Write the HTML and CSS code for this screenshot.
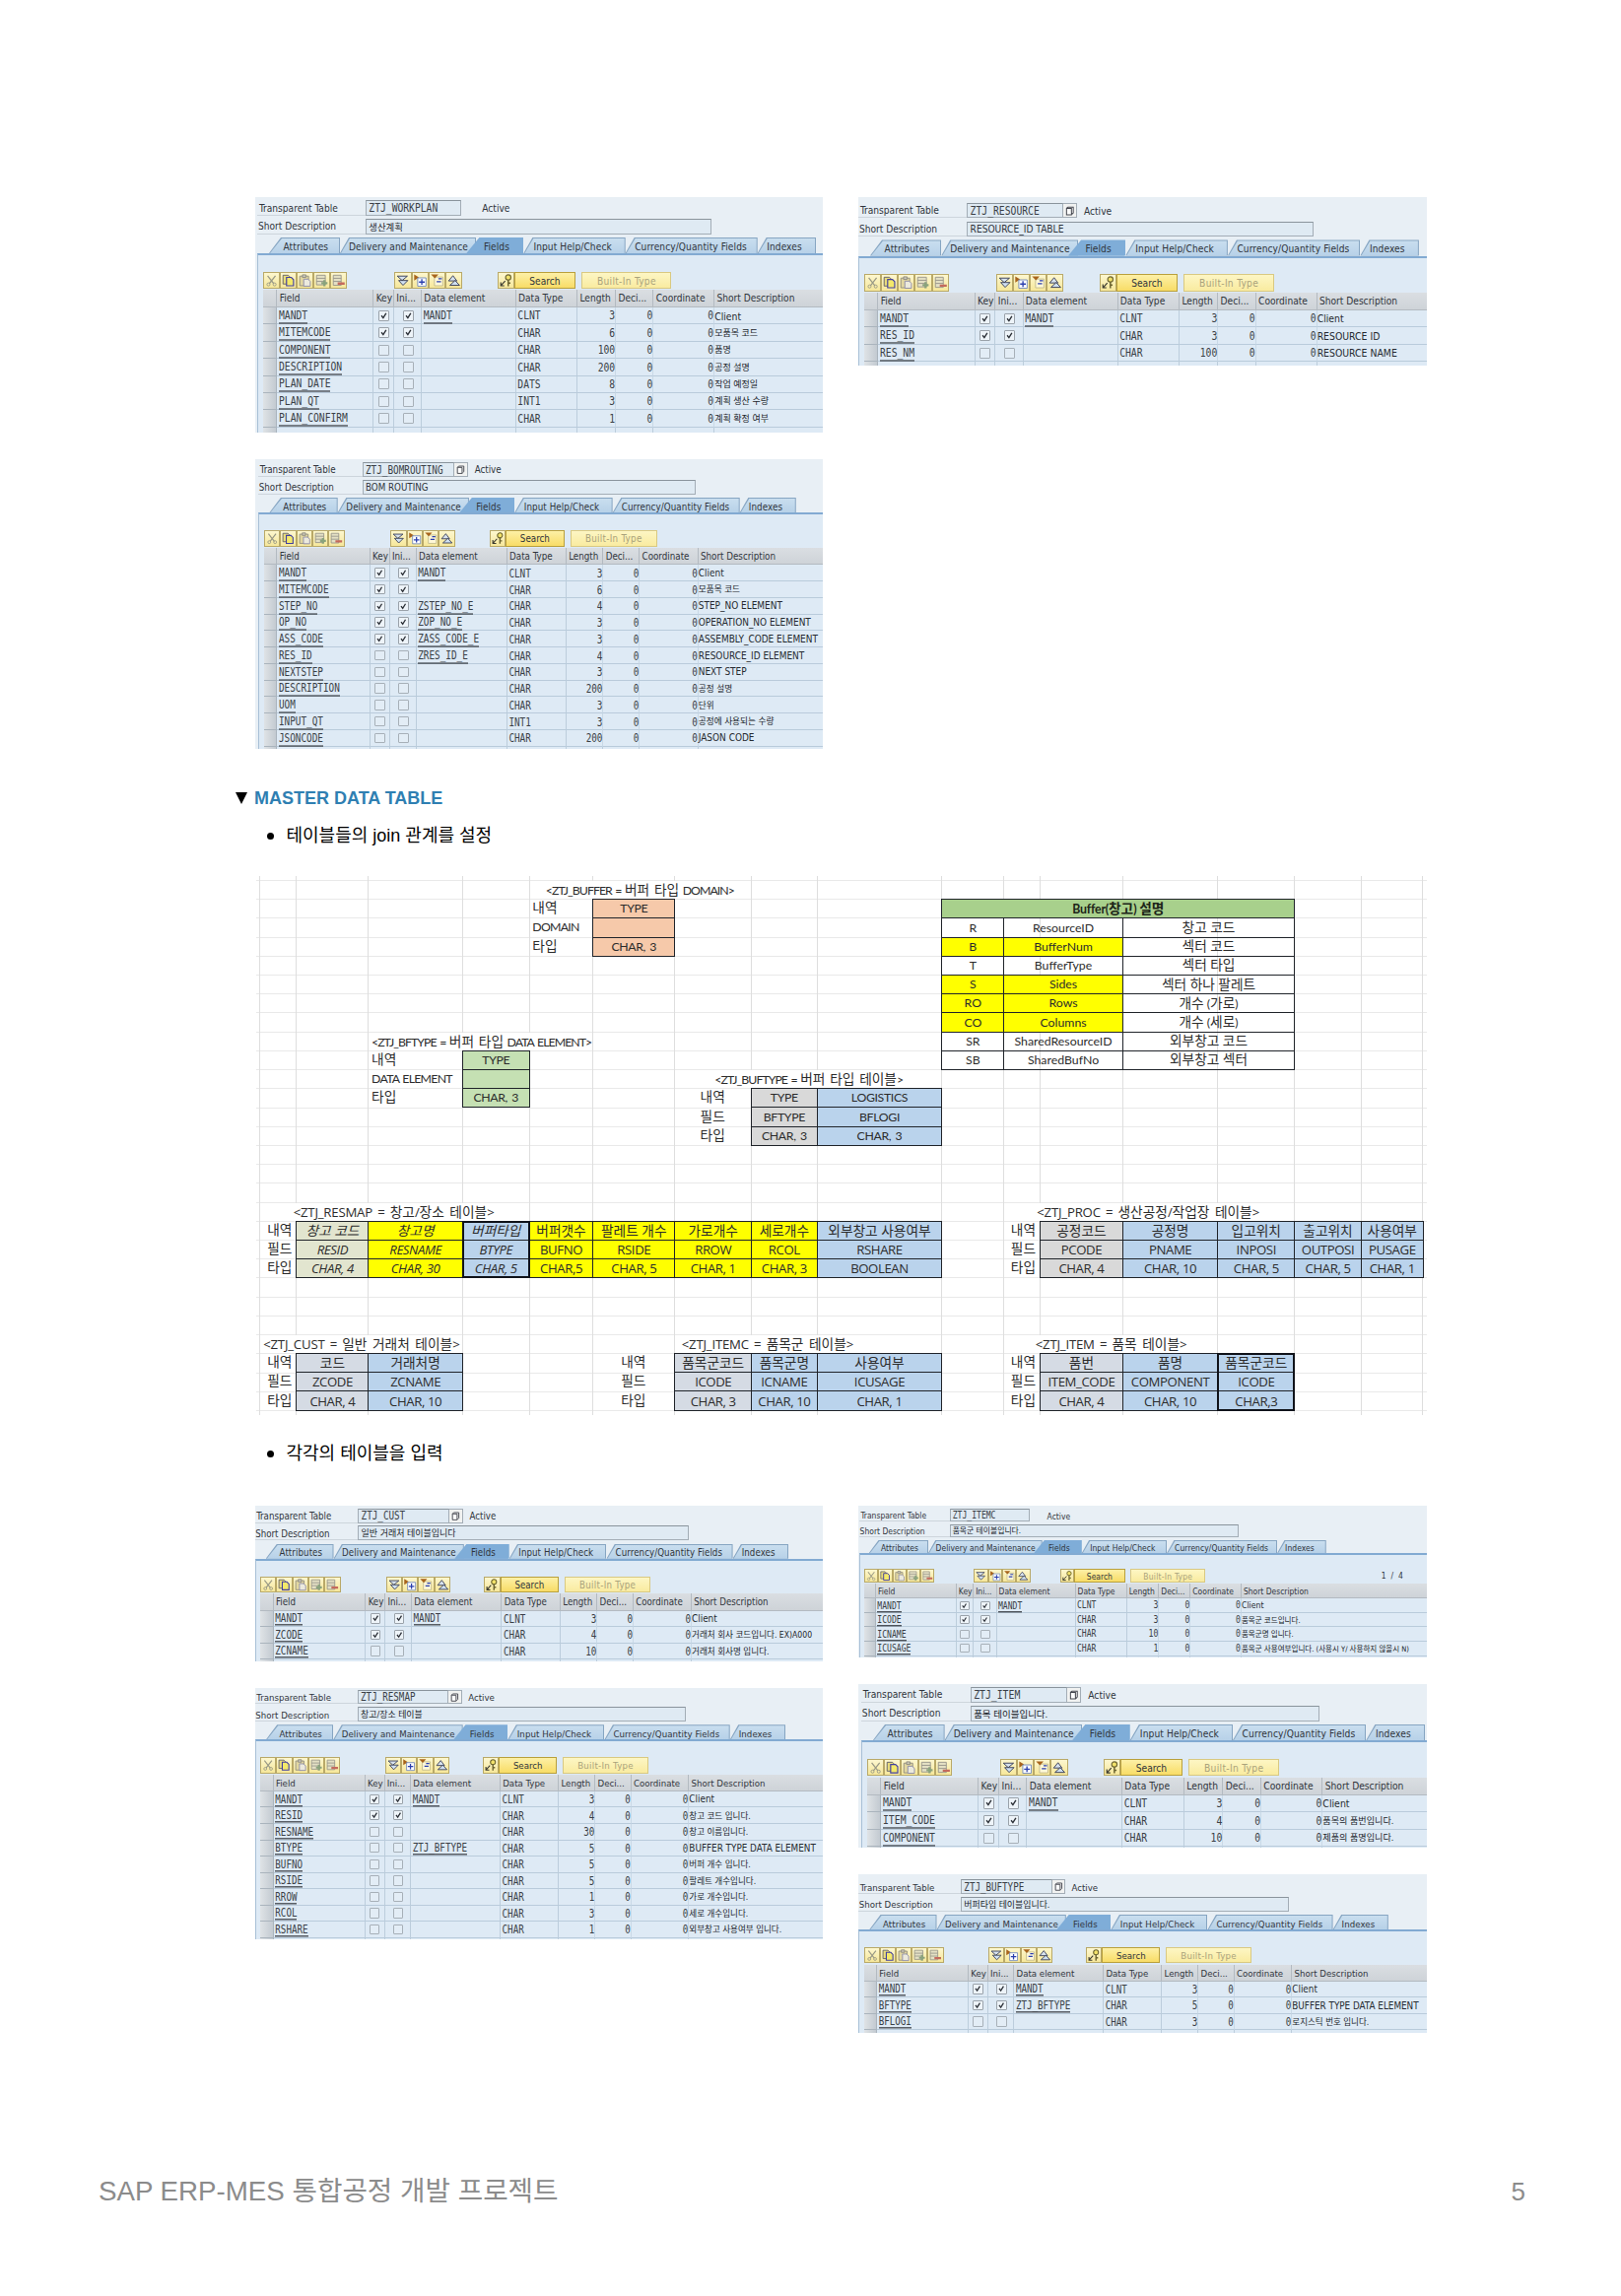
FILE: index.html
```html
<!DOCTYPE html>
<html lang="ko">
<head>
<meta charset="utf-8">
<title>SAP ERP-MES 통합공정 개발 프로젝트</title>
<link rel="stylesheet" href="styles.css">
</head>
<body>
<svg class="defs" width="0" height="0" aria-hidden="true">
  <symbol id="i-cut" viewBox="0 0 17 17"><path d="M4 3l7 9M13 3l-7 9" stroke="#9a9a86" stroke-width="1.4" fill="none"/><circle cx="5" cy="13" r="1.7" fill="none" stroke="#9a9a86"/><circle cx="12" cy="13" r="1.7" fill="none" stroke="#9a9a86"/></symbol>
  <symbol id="i-copy" viewBox="0 0 17 17"><path d="M2.500 2.500h6l2 2v8h-8z" fill="#e9dd7a" stroke="#5b5a6a"/><path d="M6.500 5h5.500l2.500 2.500v7h-8z" fill="#f4e96a" stroke="#4340a0" stroke-width="1.300"/></symbol>
  <symbol id="i-paste" viewBox="0 0 17 17"><path d="M2.500 3.500h10v11h-10z" fill="#e3d8a0" stroke="#8c8a80"/><path d="M5.500 2h4v3h-4z" fill="#c9c6b5" stroke="#8c8a80"/><path d="M7 7h5l2.500 2.500V15H7z" fill="#eceadd" stroke="#8a88a8"/></symbol>
  <symbol id="i-add" viewBox="0 0 17 17"><path d="M2.500 2.500h10v11h-10zM2.500 6h10M2.500 9.500h10" fill="#e4e0c4" stroke="#96948a"/><path d="M11.500 8v7M8 11.500h7" stroke="#8aa37c" stroke-width="2.600"/></symbol>
  <symbol id="i-del" viewBox="0 0 17 17"><path d="M2.500 2.500h9v11.500h-9zM2.500 6h9M2.500 9.500h9" fill="#e4e0c4" stroke="#96948a"/><path d="M7.500 12h8" stroke="#c46a5c" stroke-width="2.600"/></symbol>
  <symbol id="i-down" viewBox="0 0 17 17"><path d="M2.500 3.500h11.500L8 8.500z" fill="#d7e2ee" stroke="#2f3550"/><path d="M4 8.500h10.500l-5.500 5.500z" fill="#cfe0f2" stroke="#2f3550"/></symbol>
  <symbol id="i-exp" viewBox="0 0 17 17"><path d="M1.500 1.500l5.500 3.500-5.500 3.500z" fill="#a8641c"/><path d="M5.500 5.500h9.500v9.500h-9.500z" fill="#fff" stroke="#6e86b8"/><path d="M10.200 7v6.500M7 10.300h6.500" stroke="#2a3fae" stroke-width="1.500"/></symbol>
  <symbol id="i-col" viewBox="0 0 17 17"><path d="M5.500 4.500h9.500v10h-9.500z" fill="#fff8d8" stroke="#c0b98a"/><path d="M1.500 1.500h8.500l-4 4.500z" fill="#a8641c"/><path d="M8 9.800h5M10 6.500h4" stroke="#2a3fae" stroke-width="1.500"/></symbol>
  <symbol id="i-up" viewBox="0 0 17 17"><path d="M2.500 9h9.500l-4.500-6z" fill="#d7e2ee" stroke="#2f3550"/><path d="M4 14h11L10 8.500z" fill="#cfe0f2" stroke="#2f3550"/></symbol>
  <symbol id="i-key" viewBox="0 0 17 17"><circle cx="11" cy="5" r="3" fill="#f2e26a" stroke="#6d6530" stroke-width="1.300"/><path d="M11 7.500V15M11 11.500h2.500" stroke="#6d6530" stroke-width="1.700" fill="none"/><path d="M7.500 9L2.500 14.500M2.500 10.500v4h4" stroke="#3a3a30" stroke-width="1.300" fill="none"/></symbol>
  <symbol id="i-doc" viewBox="0 0 12 15"><path d="M4 3.500h6v6.500l-1.500 1.500M4 3.500L2.500 5v7h5.500V5H2.500" fill="#fff" stroke="#44464e" stroke-width="1.100"/></symbol>
  <symbol id="i-tick" viewBox="0 0 10 10"><path d="M2.300 4.700l2 2.600 3.300-5.300" fill="none" stroke="#2b2f36" stroke-width="1.500"/></symbol>
</svg>

<main class="page">
  <section class="columns columns-top">
    <div class="column">
      <article class="sap" data-table="WORKPLAN"></article>
      <article class="sap" data-table="BOMROUTING"></article>
    </div>
    <div class="column">
      <article class="sap" data-table="RESOURCE"></article>
    </div>
  </section>

  <h2 class="toggle"><span class="caret"></span>MASTER DATA TABLE</h2>
  <p class="bullet bullet-join">테이블들의 join 관계를 설정</p>

  <section class="sheet" id="sheet"></section>

  <p class="bullet bullet-input">각각의 테이블을 입력</p>

  <section class="columns columns-bottom">
    <div class="column">
      <article class="sap" data-table="CUST"></article>
      <article class="sap" data-table="RESMAP"></article>
    </div>
    <div class="column">
      <article class="sap" data-table="ITEMC"></article>
      <article class="sap" data-table="ITEM"></article>
      <article class="sap" data-table="BUFTYPE"></article>
    </div>
  </section>

  <footer class="footer"><span>SAP ERP-MES 통합공정 개발 프로젝트</span><span>5</span></footer>
</main>
<script src="app.js"></script>
</body>
</html>
```
FILE: styles.css
```css
* { box-sizing: border-box; }
body { margin: 0; background: #fff; color: #000; font-family: "Liberation Sans", "Noto Sans CJK KR", sans-serif; }
.defs { display: block; position: absolute; }
.page { width: 1645px; height: 2330px; padding: 200px 0 0 259px; overflow: hidden; display: flex; flex-direction: column; }

.columns { display: grid; grid-template-columns: 575.5px 577.5px; column-gap: 36px; flex: none; }
.column { display: flex; flex-direction: column; gap: 27px; }
.columns-top { height: 560px; }
.columns-bottom { margin-top: 39px; height: 536px; }

.toggle { margin: 36px 0 0 -20px; height: 28px; display: flex; align-items: center; font-size: 18px; line-height: 28px; color: #2f7fb2; }
.caret { width: 12px; height: 12px; margin-right: 7px; background: #000; clip-path: polygon(0 0, 100% 0, 50% 100%); }
.bullet { margin: 0 0 0 12px; height: 28px; display: flex; align-items: center; font-size: 18px; line-height: 28px; }
.bullet::before { content: ""; width: 7px; height: 7px; border-radius: 50%; background: #000; margin: 0 12.500px 0 0; }
.bullet-join { margin-top: 10px; }
.bullet-input { margin-top: 26px; }

.footer { margin: 142px 97px 0 -159px; display: flex; justify-content: space-between; font-size: 27.700px; line-height: 36px; color: #8b8b8b; }
.footer span:last-child { font-size: 26px; }

/* SAP dictionary panel: every length is a multiple of --u */
.sap { flex: none; overflow: hidden; background: #e8eff5; color: #30353c; font-family: "DejaVu Sans Condensed", "DejaVu Sans", "Noto Sans CJK KR", sans-serif; font-stretch: condensed; font-size: calc(10.100px * var(--k)); line-height: 1.2; white-space: nowrap; --u: calc(1px * var(--k)); }
.sap-in { margin-left: var(--dx); padding-top: var(--dy); height: 100%; display: flex; flex-direction: column; }
.line { display: flex; align-items: center; height: calc(15.600 * var(--u)); flex: none; }
.line + .line { margin-top: calc(3.100 * var(--u)); }
.line label { width: calc(109.800 * var(--u)); margin-left: calc(2 * var(--u)); padding-left: calc(2 * var(--u)); padding-top: 2px; border-bottom: 1px solid #cdd5dc; align-self: stretch; display: flex; align-items: center; }
.line + .line label { padding-left: calc(1 * var(--u)); }
.box { height: 100%; border: 1px solid #a3adb6; border-top-color: #8a949c; background: #dfeaf3; display: flex; align-items: center; padding-left: calc(2.500 * var(--u)); }
.box-name { width: calc(97.500 * var(--u)); }
.box-desc { width: calc(351 * var(--u)); padding-top: 1px; }
.box .ko { font-size: calc(9.400 * var(--u)); }
.doc { width: calc(14 * var(--u)); height: 100%; background: #f1f2f1; border: 1px solid #a3adb6; border-left: 0; }
.doc svg { width: 100%; height: 100%; display: block; }
.active { margin-left: calc(7 * var(--u)); padding-top: 2px; }
.nodoc .active { margin-left: calc(21 * var(--u)); }
.mono { font-family: "DejaVu Sans Mono", monospace; font-stretch: normal; font-size: calc(9.700 * var(--u)); display: inline-block; transform: scaleY(1.25); color: #3a3f46; }

.tabs { display: flex; height: calc(16 * var(--u)); margin-top: calc(3.300 * var(--u)); padding-left: calc(14 * var(--u)); flex: none; }
.tab { position: relative; display: flex; align-items: center; padding-top: calc(4 * var(--u)); height: 100%; width: calc(var(--w) * var(--u)); padding-left: calc(var(--p) * var(--u)); }
.tab::before, .tab::after { content: ""; position: absolute; inset: 0; background: #86a5c2; clip-path: polygon(calc(9 * var(--u)) 0, 100% 0, 100% 100%, 0 100%); }
.tab::after { inset: 1px 1px 0 1px; background: linear-gradient(#c9deef, #b7d1e8); }
.tab.on { margin-left: calc(-10 * var(--u)); }
.tab.on::before, .tab.on::after { background: #7fadd8; clip-path: polygon(calc(13 * var(--u)) 0, 100% 0, 100% 100%, 0 100%); }
.tab.first::before, .tab.first::after { clip-path: polygon(calc(12 * var(--u)) 0, 100% 0, 100% 100%, 0 100%); }
.tab span { position: relative; z-index: 1; letter-spacing: .008em; }

.pane { flex: 1; margin-left: calc(2.300 * var(--u)); border-left: 1px solid #a8c0d6; border-top: calc(2.600 * var(--u)) solid #82aad2; background: #deeaf5; min-height: 0; display: flex; flex-direction: column; }
.tools { margin: calc(16.700 * var(--u)) 0 0 calc(4.700 * var(--u)); height: calc(17.300 * var(--u)); display: flex; flex: none; }
.ic { width: calc(17.100 * var(--u)); height: 100%; border: 1px solid #b9a968; background: linear-gradient(#fdf7cf, #f6e79a); }
.ic svg { display: block; width: 100%; height: 100%; }
.g2 { margin-left: calc(48 * var(--u)); }
.g3 { margin-left: calc(36 * var(--u)); }
.btn { height: 100%; border: 1px solid #b9a03c; background: linear-gradient(#fdf0a6, #f8dc66); width: calc(62 * var(--u)); text-align: center; line-height: calc(17 * var(--u)); }
.btn.off { width: calc(91 * var(--u)); margin-left: calc(6.500 * var(--u)); border-color: #d9c982; background: linear-gradient(#fdf6c4, #f9eba0); color: #aaa37c; letter-spacing: .03em; }
.pages { margin-left: auto; margin-right: calc(29 * var(--u)); line-height: calc(17 * var(--u)); word-spacing: .3em; }

.grid { margin: calc(1.200 * var(--u)) 0 0 calc(4.700 * var(--u)); flex: none; }
.row { display: grid; grid-template-columns: calc(14.400 * var(--u)) calc(98 * var(--u)) calc(20.700 * var(--u)) calc(28 * var(--u)) calc(95.700 * var(--u)) calc(62.400 * var(--u)) calc(39 * var(--u)) calc(38.300 * var(--u)) calc(61.700 * var(--u)) 1fr; height: calc(17.400 * var(--u)); }
.row > div { border-right: 1px solid #bccddc; border-bottom: 1px solid #b9cbdb; display: flex; align-items: center; min-width: 0; padding-left: calc(1.600 * var(--u)); }
.row > div:last-child { border-right: 0; padding-left: 0; padding-top: 1px; }
.row > div:last-child .en { font-size: calc(10.350 * var(--u)); color: #262a30; }
.row > div:first-child { background: linear-gradient(90deg, #dfe3e6, #c3cad1); border-color: #aab4bd; }
.row.head { height: calc(18 * var(--u)); }
.row.head > div { background: linear-gradient(#dadee2, #ced3d8); border-color: #b3bac1; padding-left: calc(2.300 * var(--u)); padding-top: calc(1.500 * var(--u)); }
.row > .num { justify-content: flex-end; padding-left: 0; border-right-color: #c9d9e7; }
.row > .chk { justify-content: center; padding-left: 0; }
.row u { text-decoration: none; border-bottom: 1px solid #3a3f46; line-height: 1.240; }
.cb { width: calc(11 * var(--u)); height: calc(11 * var(--u)); border: 1px solid #9aa2aa; background: #eef4f9; border-radius: 1px; }
.row > .chk.ini { justify-content: flex-start; padding-left: calc(8.700 * var(--u)); }
.cb svg { display: block; width: 100%; height: 100%; }
.cb.no { background: #e3edf6; border-color: #a7b0b8; }
.ko { font-size: calc(9 * var(--u)); font-family: "DejaVu Sans Condensed", "Noto Sans CJK KR", sans-serif; color: #20242a; }
.row.cut > div { border-bottom: 0; }

/* Spreadsheet */
.sheet { flex: none; margin: 27px 0 0 1px; width: 1188px; height: 546px; display: grid; padding: 5px 0 0 3.200px;
  grid-template-columns: 37.200px 73.100px 95.300px 68px 64.500px 83px 77.900px 66.400px 126.900px 62.800px 36.800px 83.800px 96.500px 77.900px 67.600px 62.900px;
  grid-template-rows: repeat(28, 19.214px);
  background: repeating-linear-gradient(#fff0 0 18.200px, #e9e9e9 18.200px 19.214px) 0 5px / 100% 100% no-repeat, linear-gradient(#e9e9e9, #e9e9e9) 0 4px / 100% 1px no-repeat;
  font: 12.300px/18px Lato, "Noto Sans CJK KR", sans-serif; color: #2c2c2c; white-space: nowrap; }
.vline { margin-top: -5px; margin-bottom: -4px; border-left: 1px solid #dedede; }
.vline.last { border-right: 1px solid #dedede; }
.cell { border: 1px solid #20242a; margin: -1px -1px 0 0; display: flex; justify-content: center; align-items: center; }
.tight { letter-spacing: -.35px; word-spacing: 1.500px; }
.tag { display: flex; align-items: center; padding: 0 0 2px 3.600px; letter-spacing: -.75px; word-spacing: 1px; }
.tag.mid { justify-content: center; padding: 0 0 2px; }
.tag.end { justify-content: flex-end; padding: 0 4px 2px 0; }
.cap { display: flex; align-items: center; justify-self: start; letter-spacing: -.95px; word-spacing: 1.300px; padding-bottom: 1px; }
.cap > span { background: #fff; line-height: 17px; }
.seg { font-family: "Open Sans", "Noto Sans CJK KR", sans-serif; font-size: 13.200px; letter-spacing: -.4px; }
.cap.seg { letter-spacing: -.2px; word-spacing: 2px; }
.hg { font-size: 13.700px; letter-spacing: 0; }
.or { background: #f6c9aa; }
.gn { background: #c5e0b3; }
.gr { background: #d9d9d9; }
.bl { background: #bad3ec; }
.lg { background: #d5dbe4; }
.ol { background: #e2e5cf; }
.ye { background: #ff0; }
.hd { background: #a8d08c; font-weight: 700; color: #1c2418; letter-spacing: -.2px; }
.it { font-style: italic; }
.frame { border: 2px solid #10131a; margin: -1px -1px 0 0; }
```
FILE: app.js
```js
const tables = {
  WORKPLAN: { k: 1, dx: 0, dy: 3.3, h: 239, doc: false, desc: '생산계획', rows: [
    ['MANDT', 1, 'MANDT', 'CLNT', 3, 'Client'],
    ['MITEMCODE', 1, '', 'CHAR', 6, '모품목 코드'],
    ['COMPONENT', 0, '', 'CHAR', 100, '품명'],
    ['DESCRIPTION', 0, '', 'CHAR', 200, '공정 설명'],
    ['PLAN_DATE', 0, '', 'DATS', 8, '작업 예정일'],
    ['PLAN_QT', 0, '', 'INT1', 3, '계획 생산 수량'],
    ['PLAN_CONFIRM', 0, '', 'CHAR', 1, '계획 확정 여부']] },
  BOMROUTING: { k: .963, dx: .9, dy: 2.7, h: 294, doc: true, desc: 'BOM ROUTING', rows: [
    ['MANDT', 1, 'MANDT', 'CLNT', 3, 'Client'],
    ['MITEMCODE', 1, '', 'CHAR', 6, '모품목 코드'],
    ['STEP_NO', 1, 'ZSTEP_NO_E', 'CHAR', 4, 'STEP_NO ELEMENT'],
    ['OP_NO', 1, 'ZOP_NO_E', 'CHAR', 3, 'OPERATION_NO ELEMENT'],
    ['ASS_CODE', 1, 'ZASS_CODE_E', 'CHAR', 3, 'ASSEMBLY_CODE ELEMENT'],
    ['RES_ID', 0, 'ZRES_ID_E', 'CHAR', 4, 'RESOURCE_ID ELEMENT'],
    ['NEXTSTEP', 0, '', 'CHAR', 3, 'NEXT STEP'],
    ['DESCRIPTION', 0, '', 'CHAR', 200, '공정 설명'],
    ['UOM', 0, '', 'CHAR', 3, '단위'],
    ['INPUT_QT', 0, '', 'INT1', 3, '공정에 사용되는 수량'],
    ['JSONCODE', 0, '', 'CHAR', 200, 'JASON CODE']] },
  RESOURCE: { k: 1.0035, dx: -1.6, dy: 5.8, h: 171, doc: true, desc: 'RESOURCE_ID TABLE', rows: [
    ['MANDT', 1, 'MANDT', 'CLNT', 3, 'Client'],
    ['RES_ID', 1, '', 'CHAR', 3, 'RESOURCE ID'],
    ['RES_NM', 0, '', 'CHAR', 100, 'RESOURCE NAME']] },
  CUST: { k: .956, dx: -2.7, dy: 2.6, h: 157.5, doc: true, desc: '일반 거래처 테이블입니다', rows: [
    ['MANDT', 1, 'MANDT', 'CLNT', 3, 'Client'],
    ['ZCODE', 1, '', 'CHAR', 4, '거래처 회사 코드입니다. EX)A000'],
    ['ZCNAME', 0, '', 'CHAR', 10, '거래처 회사명 입니다.']] },
  RESMAP: { k: .95, dx: -2.5, dy: 2.1, h: 255, doc: true, desc: '창고/장소 테이블', rows: [
    ['MANDT', 1, 'MANDT', 'CLNT', 3, 'Client'],
    ['RESID', 1, '', 'CHAR', 4, '창고 코드 입니다.'],
    ['RESNAME', 0, '', 'CHAR', 30, '창고 이름입니다.'],
    ['BTYPE', 0, 'ZTJ_BFTYPE', 'CHAR', 5, 'BUFFER TYPE DATA ELEMENT'],
    ['BUFNO', 0, '', 'CHAR', 5, '버퍼 개수 입니다.'],
    ['RSIDE', 0, '', 'CHAR', 5, '팔레트 개수입니다.'],
    ['RROW', 0, '', 'CHAR', 1, '가로 개수입니다.'],
    ['RCOL', 0, '', 'CHAR', 3, '세로 개수입니다.'],
    ['RSHARE', 0, '', 'CHAR', 1, '외부창고 사용여부 입니다.']] },
  ITEMC: { k: .836, dx: -.4, dy: 3.2, h: 154, doc: false, pages: '1 / 4', desc: '품목군 테이블입니다.', rows: [
    ['MANDT', 1, 'MANDT', 'CLNT', 3, 'Client'],
    ['ICODE', 1, '', 'CHAR', 3, '품목군 코드입니다.'],
    ['ICNAME', 0, '', 'CHAR', 10, '품목군명 입니다.'],
    ['ICUSAGE', 0, '', 'CHAR', 1, '품목군 사용여부입니다. (사용시 Y/ 사용하지 않을시 N)']] },
  ITEM: { k: 1.0095, dx: 1.3, dy: 3, h: 166, doc: true, desc: '품목 테이블입니다.', rows: [
    ['MANDT', 1, 'MANDT', 'CLNT', 3, 'Client'],
    ['ITEM_CODE', 1, '', 'CHAR', 4, '품목의 품번입니다.'],
    ['COMPONENT', 0, '', 'CHAR', 10, '제품의 품명입니다.']] },
  BUFTYPE: { k: .949, dx: -1.6, dy: 5.4, h: 160.5, doc: true, desc: '버퍼타입 테이블입니다.', rows: [
    ['MANDT', 1, 'MANDT', 'CLNT', 3, 'Client'],
    ['BFTYPE', 1, 'ZTJ_BFTYPE', 'CHAR', 5, 'BUFFER TYPE DATA ELEMENT'],
    ['BFLOGI', 0, '', 'CHAR', 3, '로지스틱 번호 입니다.']] },
};

const hangul = /[\uac00-\ud7a3]/;
const use = (id) => `<svg><use href="#i-${id}"/></svg>`;
const icons = (...ids) => ids.map((id) => `<div class="ic">${use(id)}</div>`).join('');
const words = (t) => `<span class="${hangul.test(t) ? 'ko' : 'en'}">${t}</span>`;
const link = (t) => (t ? `<u class="mono">${t}</u>` : '');
const check = (on) => `<span class="cb ${on ? 'yes' : 'no'}">${on ? use('tick') : ''}</span>`;

// label, width, text inset
const tabs = [['Attributes', 72, 14.5], ['Delivery and Maintenance', 138.4, 9], ['Fields', 58, 17.5],
  ['Input Help/Check', 103.3, 10], ['Currency/Quantity Fields', 134, 9.5], ['Indexes', 59.3, 9.5]];
const heads = ['', 'Field', 'Key', 'Ini...', 'Data element', 'Data Type', 'Length', 'Deci...', 'Coordinate', 'Short Description'];

function row([field, key, element, type, length, desc]) {
  return `<div class="row"><div></div><div>${link(field)}</div><div class="chk">${check(key)}</div>
    <div class="chk ini">${check(key)}</div><div>${link(element)}</div><div><span class="mono">${type}</span></div>
    <div class="num"><span class="mono">${length}</span></div><div class="num"><span class="mono">0</span></div>
    <div class="num"><span class="mono">0</span></div><div>${words(desc)}</div></div>`;
}

document.querySelectorAll('.sap').forEach((el) => {
  const name = el.dataset.table;
  const t = tables[name];
  el.style.cssText = `--k:${t.k};--dx:${t.dx}px;--dy:${t.dy}px;height:${t.h}px`;
  if (!t.doc) el.classList.add('nodoc');
  el.innerHTML = `<div class="sap-in">
    <div class="line"><label>Transparent Table</label><div class="box box-name"><span class="mono">ZTJ_${name}</span></div>${t.doc ? `<div class="doc">${use('doc')}</div>` : ''}<span class="active">Active</span></div>
    <div class="line"><label>Short Description</label><div class="box box-desc">${words(t.desc)}</div></div>
    <div class="tabs">${tabs.map(([s, w, p], i) => `<div class="tab${i === 0 ? ' first' : ''}${i === 2 ? ' on' : ''}" style="--w:${w};--p:${p}"><span>${s}</span></div>`).join('')}</div>
    <div class="pane">
      <div class="tools">${icons('cut', 'copy', 'paste', 'add', 'del')}<div class="g2"></div>${icons('down', 'exp', 'col', 'up')}<div class="g3"></div>${icons('key')}<div class="btn">Search</div><div class="btn off">Built-In Type</div>${t.pages ? `<span class="pages">${t.pages}</span>` : ''}</div>
      <div class="grid"><div class="row head">${heads.map((h) => `<div>${h}</div>`).join('')}</div>${t.rows.map(row).join('')}
      <div class="row cut">${'<div></div>'.repeat(10)}</div></div>
    </div></div>`;
});

// Spreadsheet: columns are numbered from 1, rows from 0
const cells = [];
const put = (c, e, r, cls, text) => cells.push(`<div class="${cls}" style="grid-area:${r + 1}/${c}/${r + 2}/${e}">${text}</div>`);
const mix = (t) => t.replace(/[\uac00-\ud7a3]+(?: [\uac00-\ud7a3]+)*/g, (m) => `<span class="hg">${m}</span>`);
const title = (c, r, pad, text, cls = '') => put(c, c + 4, r, `cap ${cls}`, `<span style="margin-left:${pad}px">${mix(text.replace('<', '&lt;'))}</span>`);
const block = (c, r, cols, cls = 'tight') => cols.forEach(([tone, ...texts], i) => {
  texts.forEach((s, j) => put(c + i, c + i + 1, r + j, `cell ${tone} ${cls}`, `<span>${mix(s)}</span>`));
});
const labels = (c, r, align, texts) => texts.forEach((s, j) => put(c, c + 1, r + j, `tag ${align}`, `<span>${mix(s)}</span>`));
const frame = (c, r) => cells.push(`<div class="frame" style="grid-area:${r + 1}/${c}/${r + 4}/${c + 1}"></div>`);

for (let c = 1; c <= 16; c++) cells.push(`<div class="vline${c === 16 ? ' last' : ''}" style="grid-area:1/${c}/29/${c + 1}"></div>`);
const kinds = ['내역', '필드', '타입'];

title(5, 0, 17, '<ZTJ_BUFFER = 버퍼 타입 DOMAIN>');
labels(5, 1, '', ['내역', 'DOMAIN', '타입']);
block(6, 1, [['or', 'TYPE', '', 'CHAR, 3']]);
title(3, 8, 3.5, '<ZTJ_BFTYPE = 버퍼 타입 DATA ELEMENT>');
labels(3, 9, '', ['내역', 'DATA ELEMENT', '타입']);
block(4, 9, [['gn', 'TYPE', '', 'CHAR, 3']]);
title(7, 10, 41, '<ZTJ_BUFTYPE = 버퍼 타입 테이블>');
labels(7, 11, 'mid', kinds);
block(8, 11, [['gr', 'TYPE', 'BFTYPE', 'CHAR, 3'], ['bl', 'LOGISTICS', 'BFLOGI', 'CHAR, 3']]);

put(10, 15, 1, 'cell hd', `<span>${mix('Buffer(창고) 설명')}</span>`);
[['R', 'ResourceID', '창고 코드'], ['B', 'BufferNum', '섹터 코드', 1], ['T', 'BufferType', '섹터 타입'],
  ['S', 'Sides', '섹터 하나 팔레트', 1], ['RO', 'Rows', '개수 (가로)', 1], ['CO', 'Columns', '개수 (세로)', 1],
  ['SR', 'SharedResourceID', '외부창고 코드'], ['SB', 'SharedBufNo', '외부창고 섹터']].forEach(([a, b, d, y], i) => {
  const tone = y ? 'cell ye' : 'cell';
  put(10, 11, 2 + i, tone, a);
  put(11, 13, 2 + i, tone, b);
  put(13, 15, 2 + i, 'cell', `<span>${mix(d)}</span>`);
});

title(1, 17, 34.5, '<ZTJ_RESMAP = 창고/장소 테이블>', 'seg');
labels(1, 18, 'end', kinds);
block(2, 18, [['ol it', '창고 코드', 'RESID', 'CHAR, 4'], ['ye it', '창고명', 'RESNAME', 'CHAR, 30'],
  ['bl it', '버퍼타입', 'BTYPE', 'CHAR, 5'], ['ye', '버퍼갯수', 'BUFNO', 'CHAR,5'], ['ye', '팔레트 개수', 'RSIDE', 'CHAR, 5'],
  ['ye', '가로개수', 'RROW', 'CHAR, 1'], ['ye', '세로개수', 'RCOL', 'CHAR, 3'], ['bl', '외부창고 사용여부', 'RSHARE', 'BOOLEAN']], 'seg');
frame(4, 18);

title(11, 17, 34, '<ZTJ_PROC = 생산공정/작업장 테이블>', 'seg');
labels(11, 18, 'end', kinds);
block(12, 18, [['gr', '공정코드', 'PCODE', 'CHAR, 4'], ['bl', '공정명', 'PNAME', 'CHAR, 10'],
  ['bl', '입고위치', 'INPOSI', 'CHAR, 5'], ['bl', '출고위치', 'OUTPOSI', 'CHAR, 5'], ['bl', '사용여부', 'PUSAGE', 'CHAR, 1']], 'seg');

title(1, 24, 4, '<ZTJ_CUST = 일반 거래처 테이블>', 'seg');
labels(1, 25, 'end', kinds);
block(2, 25, [['lg', '코드', 'ZCODE', 'CHAR, 4'], ['bl', '거래처명', 'ZCNAME', 'CHAR, 10']], 'seg');

title(7, 24, 7.5, '<ZTJ_ITEMC = 품목군 테이블>', 'seg');
labels(6, 25, 'mid', kinds);
block(7, 25, [['lg', '품목군코드', 'ICODE', 'CHAR, 3'], ['bl', '품목군명', 'ICNAME', 'CHAR, 10'], ['bl', '사용여부', 'ICUSAGE', 'CHAR, 1']], 'seg');

title(11, 24, 32.5, '<ZTJ_ITEM = 품목 테이블>', 'seg');
labels(11, 25, 'end', kinds);
block(12, 25, [['lg', '품번', 'ITEM_CODE', 'CHAR, 4'], ['bl', '품명', 'COMPONENT', 'CHAR, 10'], ['bl', '품목군코드', 'ICODE', 'CHAR,3']], 'seg');
frame(14, 25);

document.getElementById('sheet').innerHTML = cells.join('');
```
